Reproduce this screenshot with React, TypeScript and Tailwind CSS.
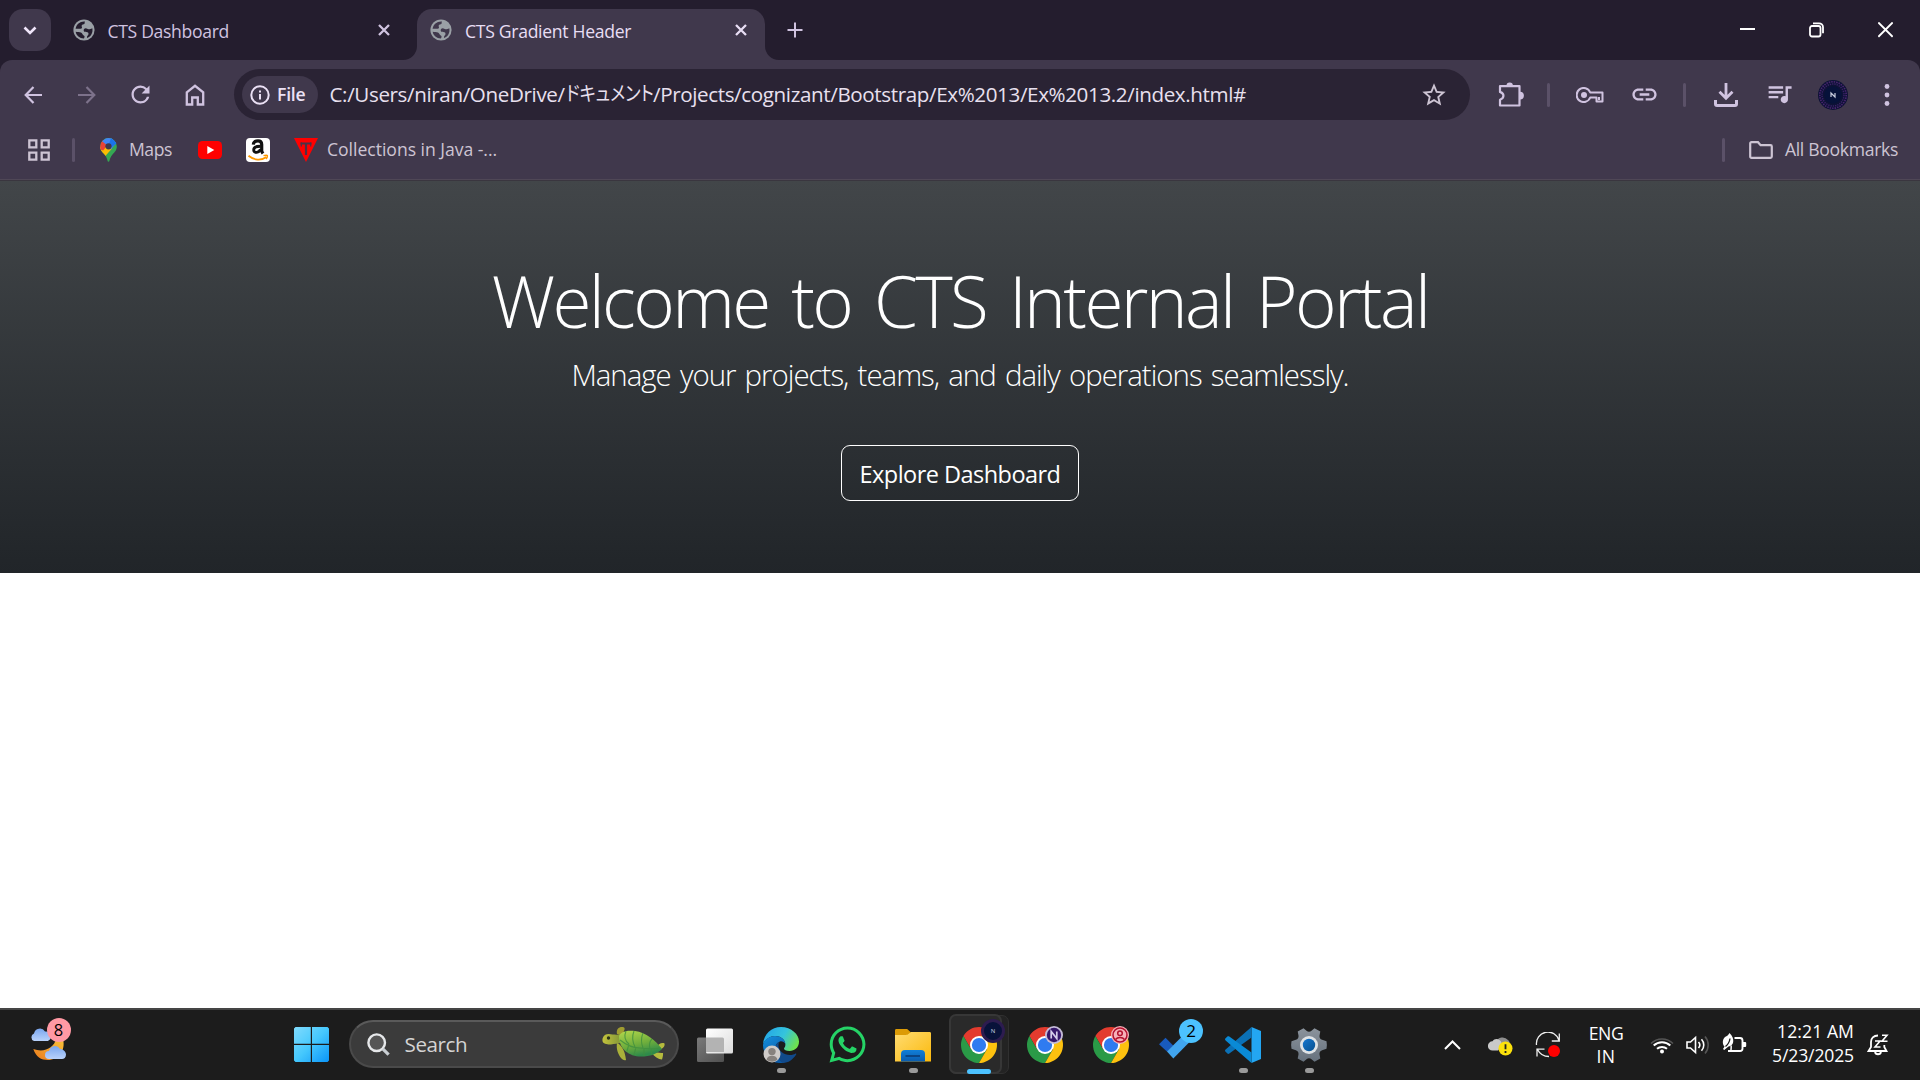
import React from "react";
import { MdRefresh, MdStarBorder, MdLink, MdQueueMusic } from "react-icons/md";
import { FaWhatsapp } from "react-icons/fa";

function Globe() {
  return (
    <svg width="22" height="22" viewBox="0 0 22 22" className="shrink-0">
      <circle cx="11" cy="11" r="10.6" fill="#9aa0a6" />
      <g className="fill-[var(--hole)]">
        <path d="M12 2.500C7.400 2 3.300 5 2.600 9.800h4.200c1.200 0 2.200-.4 2.200-1.400 0-.8-.6-1.300-.3-2 .5-1 1.900-.6 2.600-1.300.7-.8.1-1.900.7-2.600z" />
        <path d="M2.700 12.700c1.900.3 3.800.2 5.300.9 1.600.8 1.300 2.400 2.700 2.900 1.300.5 1 1.700.2 2.900-4.200 0-7.600-2.800-8.200-6.700z" />
        <path d="M19.300 9.200c.9 4.300-1.300 8.300-5 9.700-.8-.6-.2-1.800.6-2.600.9-.9.9-2.500-.4-3.100-1.500-.6-3.200.1-3.700-1.300-.5-1.300.6-2.600 2-2.600 1.200 0 1.600 1 2.800 1 1.300 0 2.300-.6 3.700-1.100z" />
      </g>
    </svg>
  );
}

function CloseX({ className }: { className: string }) {
  return (
    <svg width="12" height="12" viewBox="0 0 12 12" className={className} fill="none" stroke="currentColor" strokeWidth="2.300">
      <path d="M1 1l10 10M11 1L1 11" />
    </svg>
  );
}

function TabStrip() {
  return (
    <div className="flex h-[60px] items-end bg-[#241d2e]">
      <button className="mb-[9px] ml-[9px] flex size-[42px] shrink-0 items-center justify-center rounded-[14px] bg-[#40384c]">
        <svg width="14" height="9" viewBox="0 0 14 9" fill="none" stroke="#f0e6fa" strokeWidth="2.600">
          <path d="M1.500 1.500L7 7l5.500-5.500" />
        </svg>
      </button>
      <div className="flex h-[51px] w-[352px] items-start pt-[10px] pl-[22px] text-[#d0c3e0] [--hole:#241d2e]">
        <Globe />
        <span className="ml-[12.500px] h-[24px] w-[270px] text-[17.6px] leading-[24.500px] tracking-[-0.335px]">CTS Dashboard</span>
        <CloseX className="mt-[5px]" />
      </div>
      <svg width="14" height="14" viewBox="0 0 14 14" className="shrink-0"><path d="M14 0v14H0A14 14 0 0 0 14 0z" fill="#40384c" /></svg>
      <div className="flex h-[51px] w-[348px] items-start rounded-t-[15px] bg-[#40384c] pt-[10px] pl-[13px] text-[#e8def4] [--hole:#40384c]">
        <Globe />
        <span className="ml-[13px] h-[24px] w-[270px] text-[17.6px] leading-[24.500px] tracking-[-0.300px]">CTS Gradient Header</span>
        <CloseX className="mt-[5px]" />
      </div>
      <svg width="14" height="14" viewBox="0 0 14 14" className="shrink-0"><path d="M0 0v14h14A14 14 0 0 1 0 0z" fill="#40384c" /></svg>
      <svg width="16" height="16" viewBox="0 0 16 16" className="mb-[22px] ml-[8px]" stroke="#d0c3e0" strokeWidth="2"><path d="M8 .5v15M.5 8h15" /></svg>
      <div className="mb-[22px] ml-auto flex items-center gap-[54px] pr-[27px]">
        <svg width="15" height="16" viewBox="0 0 15 16"><path d="M0 7h15" stroke="#fff" strokeWidth="2" /></svg>
        <svg width="15" height="16" viewBox="0 0 15 16" fill="none" stroke="#fff" strokeWidth="1.800">
          <rect x="1" y="4" width="10.500" height="10.500" rx="2" />
          <path d="M4 1.300h6a4 4 0 0 1 4 4v6" />
        </svg>
        <svg width="15" height="16" viewBox="0 0 15 16" stroke="#fff" strokeWidth="2"><path d="M.3.500l14.400 14.400M14.700.500L.3 14.900" /></svg>
      </div>
    </div>
  );
}

function Divider({ className }: { className: string }) {
  return <div className={`h-6 w-[3px] shrink-0 rounded-full bg-[#5b5168] ${className}`} />;
}

function Toolbar() {
  return (
    <div className="bg-[#241d2e]">
      <div className="flex h-[69px] items-center rounded-t-xl bg-[#40384c] text-[#d0c3e0]">
        <svg width="18" height="18" viewBox="0 0 18 18" className="ml-6" fill="none" stroke="currentColor" strokeWidth="2.200"><path d="M9.500 1L1.700 9l7.800 8M1.700 9H18" /></svg>
        <svg width="18" height="18" viewBox="0 0 18 18" className="ml-9" fill="none" stroke="#7d728b" strokeWidth="2.200"><path d="M8.500 1l7.800 8-7.800 8M16.300 9H0" /></svg>
        <MdRefresh size={27} className="ml-[31px]" />
        <svg width="20" height="22" viewBox="0 0 20 22" className="ml-[31px]" fill="none" stroke="currentColor" strokeWidth="2.300">
          <path d="M1.800 8.300L10 1.800l8.200 6.500v12.200h-5.400v-7H7.200v7H1.800z" />
        </svg>
        <div className="ml-[29px] flex h-[51px] w-[1236px] items-center rounded-full bg-[#2a2334] pl-[7.500px]">
          <div className="flex h-[37px] w-[76px] items-center rounded-full bg-[#40384c] pl-2 text-[#ebe1f5]">
            <svg width="20" height="20" viewBox="0 0 20 20" fill="none" stroke="currentColor" strokeWidth="2"><circle cx="10" cy="10" r="8.700" /><path d="M10 9v5.500M10 5.500v2" /></svg>
            <span className="mb-px ml-[7.500px] text-[17.6px] leading-6 font-semibold tracking-[-0.228px]">File</span>
          </div>
          <div className="mb-[2px] ml-[12px] flex items-center text-[20.6px] leading-[30px] whitespace-nowrap text-[#e8e0ef]">
            <span className="w-[236px] tracking-[-0.374px]">C:/Users/niran/OneDrive/</span>
            <span className="w-[87.500px]"><span className="inline-block origin-left scale-x-[0.860] text-[20px] [font-feature-settings:'palt']">ドキュメント</span></span>
            <span className="tracking-[-0.378px]">/Projects/cognizant/Bootstrap/Ex%2013/Ex%2013.2/index.html#</span>
          </div>
          <MdStarBorder size={28} className="mr-[22px] ml-auto text-[#cdc4d3]" />
        </div>
        <svg width="26" height="26" viewBox="0 0 26 26" className="ml-[28px]">
          <path d="M2 4.200h19.500v19.300H2v-5.800c4.600-1.600 4.600-6.200 0-7.800z" fill="none" stroke="currentColor" strokeWidth="2.200" strokeLinejoin="round" />
          <path d="M8.500 3.600a3.200 3.200 0 0 1 6.400 0zM22 9.700a3.900 3.900 0 0 1 0 7.800z" fill="currentColor" />
        </svg>
        <Divider className="ml-[23px]" />
        <svg width="28" height="16" viewBox="0 0 28 16" className="ml-[26px]" fill="none" stroke="currentColor" strokeWidth="2">
          <path d="M14.200 5.500a7 7 0 1 0 0 5h6.300v4h6V5.500z" strokeLinejoin="round" />
          <circle cx="8" cy="8" r="3" fill="currentColor" stroke="none" />
          <path d="M23 10v3" />
        </svg>
        <MdLink size={29} className="ml-[25.500px]" />
        <Divider className="ml-6" />
        <svg width="24" height="24" viewBox="0 0 24 24" className="ml-[28px]" fill="none" stroke="currentColor">
          <path d="M12 0v14M5.500 8.700l6.500 6.500 6.500-6.500" strokeWidth="2.800" />
          <path d="M1.500 17v4a1.500 1.500 0 0 0 1.500 1.500h18a1.500 1.500 0 0 0 1.500-1.500v-4" strokeWidth="3" />
        </svg>
        <MdQueueMusic size={29} className="mb-[3px] ml-[27px]" />
        <svg width="30" height="30" viewBox="0 0 30 30" className="ml-[24px]">
          <circle cx="15" cy="15" r="15" fill="#0d1236" />
          <circle cx="15" cy="15" r="13.200" fill="none" stroke="#4a2470" strokeWidth="1.600" strokeDasharray="1.500 1" />
          <circle cx="15" cy="15" r="11" fill="none" stroke="#3b2166" strokeWidth="1.500" strokeDasharray="1.300 1" />
          <circle cx="15" cy="15" r="8.500" fill="#06123a" />
          <path d="M13 17v-4l4 4v-4" fill="none" stroke="#c9cfdf" strokeWidth="1.200" />
        </svg>
        <svg width="6" height="22" viewBox="0 0 6 22" className="ml-9" fill="currentColor"><circle cx="3" cy="2.500" r="2.400" /><circle cx="3" cy="11" r="2.400" /><circle cx="3" cy="19.500" r="2.400" /></svg>
      </div>
    </div>
  );
}

function BookmarksBar() {
  return (
    <div className="flex h-[51px] items-start border-b border-[#4f4756] bg-[#40384c] pt-[9px] text-[17.6px] leading-[23px] whitespace-nowrap text-[#cdc4d3]">
      <svg width="22" height="22" viewBox="0 0 22 22" className="mt-px ml-7" fill="none" stroke="currentColor" strokeWidth="2.300">
        <path d="M1.300 1.300h7v7h-7zM13.700 1.300h7v7h-7zM1.300 13.700h7v7h-7zM13.700 13.700h7v7h-7z" />
      </svg>
      <Divider className="ml-[22px]" />
      <svg width="17" height="24" viewBox="0 0 17 24" className="ml-[24.500px]">
        <defs><clipPath id="pin"><path d="M8.500 0A8.300 8.300 0 0 0 .2 8.300c0 4 2 5.600 4.300 8.200 2 2.400 2.700 4.500 3.100 6.500.2 1.100 1.600 1.100 1.800 0 .4-2 1.100-4.100 3.100-6.500 2.300-2.600 4.300-4.200 4.300-8.200A8.300 8.300 0 0 0 8.500 0z" /></clipPath></defs>
        <g clipPath="url(#pin)">
          <path d="M0 0h17v24H0z" fill="#34a853" />
          <path d="M0 18V9l6-2 6 3.500-8 9z" fill="#fbbc04" />
          <path d="M0 11.500V3l3-1 5 4.500-4.800 6z" fill="#ea4335" />
          <path d="M2 3.200L6 0h6l4.500 5-5.800 6.500L5.500 6z" fill="#4285f4" />
          <path d="M11 0l6 5-5 4-3-3z" fill="#1a73e8" />
        </g>
        <circle cx="8.500" cy="8.300" r="3.100" fill="#40384c" />
      </svg>
      <span className="ml-[12.500px] w-[68.500px] tracking-[-0.455px]">Maps</span>
      <svg width="24" height="18" viewBox="0 0 24 18" className="mt-[3px]"><rect width="24" height="18" rx="4.500" fill="#f00" /><path d="M9.300 5l7 4-7 4z" fill="#fff" /></svg>
      <div className="ml-6 h-6 w-6 rounded-[4px] bg-white">
        <svg width="24" height="24" viewBox="0 0 24 24" fill="none">
          <path d="M7.300 6.600C7.600 3.800 9.600 2.900 12 2.900c2.500 0 3.700 1.200 3.700 3.600v6c0 1.500.6 2 1.300 3" stroke="#111" strokeWidth="3.200" />
          <path d="M14.500 8.200c-4.500 0-6.800 1-6.800 3.700 0 3.600 5.600 3.200 6.800-.8" stroke="#111" strokeWidth="2.900" />
          <path d="M2.500 17.800c5.500 4.600 12.800 5 18 1.200" stroke="#ff9900" strokeWidth="1.800" />
          <path d="M17.500 17.700c2-.6 4-.6 3.900.2 0 1-.6 2.400-1.400 3.200" stroke="#ff9900" strokeWidth="1.400" />
        </svg>
      </div>
      <svg width="24" height="24" viewBox="0 0 24 24" className="ml-6"><path d="M0 0h24L12 24z" fill="#f00" /><path d="M6.500 5.500h11M12 5v12" stroke="#4b3246" strokeWidth="2.200" /><path d="M7.300 4.500v4M16.700 4.500v4" stroke="#4b3246" strokeWidth="1.200" /></svg>
      <span className="ml-[9.500px] tracking-[-0.030px]">Collections in Java -...</span>
      <Divider className="ml-auto" />
      <svg width="24" height="18" viewBox="0 0 24 18" className="mt-[3px] ml-6" fill="none" stroke="currentColor" strokeWidth="2.200"><path d="M1.200 15V2.500c0-.8.500-1.300 1.300-1.300H9l2.600 3h9.900c.8 0 1.300.5 1.300 1.300V15.500c0 .8-.5 1.300-1.300 1.300h-19c-.8 0-1.300-.5-1.300-1.300z" /></svg>
      <span className="mr-[22px] ml-3 tracking-[-0.321px]">All Bookmarks</span>
    </div>
  );
}

function Hero() {
  return (
    <header className="flex h-[392px] flex-col items-center bg-linear-to-b from-[#424649] to-[#212529] pt-[77px] text-center whitespace-nowrap text-white [font-family:'Open_Sans','Noto_Sans',sans-serif]">
      <h1 className="text-[71px] leading-[86px] font-light tracking-[-2.670px] [word-spacing:7px]">Welcome to CTS Internal Portal</h1>
      <p className="mt-[9px] text-[29.4px] leading-[45px] font-light tracking-[-0.990px] [word-spacing:2.500px]">Manage your projects, teams, and daily operations seamlessly.</p>
      <button className="mt-[47px] h-14 w-[238px] rounded-[9px] border border-white text-[23.5px] leading-[56px] tracking-[-0.538px]">Explore Dashboard</button>
    </header>
  );
}

function ChromeIcon() {
  return (
    <svg width="36" height="36" viewBox="2 2 44 44">
      <path d="M4.950 13A22 22 0 0 1 43.050 13H24L14.470 29.500z" fill="#e33b2e" />
      <path d="M24 46A22 22 0 0 1 4.950 13L14.470 29.500H33.530z" fill="#2a9a47" />
      <path d="M43.050 13A22 22 0 0 1 24 46L33.530 29.500 24 13z" fill="#fdc10f" />
      <circle cx="24" cy="24" r="11" fill="#fff" />
      <circle cx="24" cy="24" r="8.700" fill="#2f7bf0" />
    </svg>
  );
}

function EdgeIcon() {
  return (
    <svg width="36" height="36" viewBox="0 0 36 36">
      <defs>
        <linearGradient id="eg1" x1="0" y1="0.200" x2="1" y2="0.600"><stop offset="0" stopColor="#22a5e8" /><stop offset=".55" stopColor="#35c4dc" /><stop offset="1" stopColor="#6fe34c" /></linearGradient>
        <linearGradient id="eg2" x1="0" y1="0" x2="0.500" y2="1"><stop offset="0" stopColor="#1490df" /><stop offset="1" stopColor="#0c59a4" /></linearGradient>
      </defs>
      <path d="M0 17C.8 7 8.500 0 18 0c10.500 0 18 7.500 18 14.500 0 6-4.500 9.500-9.500 9.500-3.500 0-5.500-1.200-5.500-2.300 0-1 1.400-1.500 1.400-4C22.400 12 17 9 12.500 9 7 9 2.500 12 0 17z" fill="url(#eg1)" />
      <path d="M0 18C1 12.500 6.500 9 12 9c5.500 0 10 3 10.400 8-1-2-3.400-3-5.400-2.500-3.500 1-5 4.500-4.500 8C13 29 17 34.500 22 35.500 9.500 38.500 0 29 0 18z" fill="url(#eg2)" />
      <path d="M12.500 22c-.3-3.500 1.300-6.300 4.300-7.400-1 1.200-1.300 2.400-1.300 4 0 5.500 5.500 9.400 11.500 9.400 2.500 0 4.200-.7 5.300-1.300.6-.3 1.300.3.900.9C29.500 33 25.500 36 20 36c-4-2-7.100-8.500-7.500-14z" fill="#114a8b" />
      <circle cx="9" cy="27" r="8.500" fill="#cfcbc8" />
      <circle cx="9" cy="24.600" r="3.700" fill="#87827e" />
      <path d="M3.500 32.800a5.600 5 0 0 1 11 0A8.400 8.400 0 0 1 3.500 32.800z" fill="#87827e" />
    </svg>
  );
}

function ExplorerIcon() {
  return (
    <svg width="36" height="36" viewBox="0 0 36 36">
      <defs>
        <linearGradient id="fo" x1="0" y1="0" x2="1" y2="1"><stop offset="0" stopColor="#ffdc72" /><stop offset="1" stopColor="#fbb90c" /></linearGradient>
        <linearGradient id="fb" x1="0" y1="0" x2="0" y2="1"><stop offset="0" stopColor="#117fd8" /><stop offset="1" stopColor="#0a5cae" /></linearGradient>
      </defs>
      <path d="M0 3.500C0 2.500.5 2 1.500 2h9.700c1 0 1.500.3 2.100.9L16 5.500V10H0z" fill="#dc9b06" />
      <path d="M0 8h11c1 0 1.700-.2 2.400-.9L15 5.800c.6-.5 1-.8 2-.8h17.500c1 0 1.500.5 1.500 1.500V34.500H0z" fill="url(#fo)" />
      <path d="M6 34.500V27a4 4 0 0 1 4-4h16a4 4 0 0 1 4 4v7.500z" fill="url(#fb)" />
      <path d="M10.500 29h14.500" stroke="#0b4584" strokeWidth="2" />
    </svg>
  );
}

function Turtle() {
  return (
    <svg width="63" height="36" viewBox="0 0 63 36">
      <defs>
        <linearGradient id="sh" x1="0" y1="0" x2="0.400" y2="1"><stop offset="0" stopColor="#b5d84c" /><stop offset=".6" stopColor="#6fae3c" /><stop offset="1" stopColor="#2f8a4a" /></linearGradient>
        <linearGradient id="sk" x1="0" y1="0" x2="1" y2="0"><stop offset="0" stopColor="#c3c23c" /><stop offset="1" stopColor="#7f9438" /></linearGradient>
      </defs>
      <path d="M15 8C14 3 17 .5 21 1c2 .5 2 2 1 4l-2 5z" fill="#a09c30" />
      <path d="M15 17c3 1 8 6 9 17-1.500 1-4-.5-5-2-3-4-5-9-4-15z" fill="#aab13a" />
      <path d="M54 22c2-4 6-6 8.500-4.500.8 3-2.500 6-6 6.500zM50 27c3-1 8 0 11 0 .3 2-.5 5-1 6.500-3.500 0-8-3-10-6.500z" fill="#b5bb3e" />
      <path d="M.5 15C0 11 3 7.500 7 8c3 .3 6 1 11 .5l2 8c-4 1-8 1.500-11 2-3 .3-8-.5-8.500-3.500z" fill="url(#sk)" />
      <path d="M17 10c2-5 9-6 16-5 11 1.500 20 9 27 18-5 5-12 7.500-21 7.500C27 30.500 17 23 17 10z" fill="url(#sh)" />
      <path d="M24 5c-2 5-1 10 3 13M32 5c-2 5-2 10 1 16M41 7c-2 5-2 10 0 15M50 13c-3 3-3 6-2 10M18 14c5 4 12 8 20 8 8 1 14 1 21 0M27 18l-2 7M34 21l-2 8M42 23v7M49 23l1 6" stroke="#3f8f3f" strokeWidth="1.100" fill="none" opacity=".8" />
      <circle cx="6.500" cy="12" r="1.700" fill="#2b3417" />
    </svg>
  );
}

function AppCell({ children, running }: { children: React.ReactNode; running?: boolean }) {
  return (
    <div className="relative flex h-full w-[66px] shrink-0 items-center justify-center">
      {children}
      {running && <div className="absolute bottom-[6px] left-[29px] h-[5px] w-[9px] rounded-full bg-[#9a9a9a]" />}
    </div>
  );
}

function GearIcon() {
  return (
    <svg width="36" height="36" viewBox="0 0 36 36">
      <defs>
        <linearGradient id="ge" x1="0" y1="0" x2="0" y2="1"><stop offset="0" stopColor="#8b939c" /><stop offset="1" stopColor="#66717d" /></linearGradient>
        <linearGradient id="gc" x1="0" y1="0" x2="1" y2="1"><stop offset="0" stopColor="#1577cf" /><stop offset="1" stopColor="#07508f" /></linearGradient>
      </defs>
      <path d="M12.500 1.200l3 2.600c1.500 1.200 3.500 1.200 5 0l3-2.600 5.800 3.300-.8 4c-.3 2 .7 3.700 2.600 4.300l4.400 1.500c.5 2.500.5 5 0 7.400l-4.400 1.500c-1.900.6-2.900 2.300-2.600 4.300l.8 4-5.800 3.300-3-2.600c-1.500-1.200-3.500-1.200-5 0l-3 2.600-5.800-3.300.8-4c.3-2-.7-3.700-2.600-4.300L.5 21.700c-.5-2.500-.5-5 0-7.400l4.400-1.500c1.900-.6 2.900-2.300 2.600-4.300l-.8-4z" fill="url(#ge)" />
      <circle cx="18" cy="18" r="9" fill="#dfe3e6" />
      <circle cx="18" cy="18" r="6.200" fill="url(#gc)" />
    </svg>
  );
}

function Taskbar() {
  return (
    <footer className="flex h-[72px] items-center border-t-2 border-[#454545] bg-[#1c1c1c] pb-px text-white">
      <div className="relative ml-[30px] h-9 w-9">
        <svg width="36" height="36" viewBox="0 0 36 36">
          <defs>
            <linearGradient id="mo" x1="1" y1="0" x2="0" y2="1"><stop offset="0" stopColor="#f9c23a" /><stop offset="1" stopColor="#ea7a1c" /></linearGradient>
            <linearGradient id="cl" x1="0" y1="0" x2="0" y2="1"><stop offset="0" stopColor="#7ba7ef" /><stop offset="1" stopColor="#b9d2fb" /></linearGradient>
          </defs>
          <path d="M33 12c3 12-5 21-15 21-7 0-12-3-14.700-11C14 26 24 21 26 12z" fill="url(#mo)" />
          <path d="M4 14a4 4 0 0 1 0-7.500A6 6 0 0 1 15 4.500c3 0 6 2 6 5 0 2-1.500 4.500-4 4.500z" fill="url(#cl)" />
          <path d="M19 32a4 4 0 0 1 0-8A6 6 0 0 1 30 22c3 0 6 2.500 6 5.500S34 32 32 32z" fill="url(#cl)" />
        </svg>
        <div className="absolute -top-[9px] left-[16.500px] h-6 w-6 rounded-full bg-[#ff99a4] text-center text-[16.500px] leading-6 text-black">8</div>
      </div>
      <svg width="35" height="35" viewBox="0 0 35 35" className="ml-[228px]">
        <defs><linearGradient id="wi" gradientUnits="userSpaceOnUse" x1="0" y1="0" x2="35" y2="35"><stop offset="0" stopColor="#80dbfd" /><stop offset=".5" stopColor="#45c8fd" /><stop offset="1" stopColor="#0a94f8" /></linearGradient></defs>
        <path d="M1.500 0H16.800V16.800H0V1.500zM18 0h15.500L35 1.500V16.800H18zM0 18h16.800v17H1.500L0 33.500zM18 18h17v15.500L33.500 35H18z" fill="url(#wi)" />
      </svg>
      <div className="mb-px ml-5 flex h-12 w-[330px] items-center rounded-full border-2 border-[#4a4a4a] border-t-[#5a5a5a] bg-[#3b3b3b] pl-4">
        <svg width="23" height="23" viewBox="0 0 23 23" fill="none"><circle cx="9.700" cy="9.700" r="8.300" fill="#555" stroke="#e6e8ea" strokeWidth="2.400" /><path d="M15.800 15.800l5.800 5.800" stroke="#c9ced3" strokeWidth="3.200" /></svg>
        <span className="ml-[14.500px] text-[20.6px] leading-7 tracking-[-0.416px] text-[#d4d4d4]">Search</span>
        <div className="mr-[12px] ml-auto"><Turtle /></div>
      </div>
      <div className="ml-[3px] flex h-full items-center">
        <AppCell>
          <svg width="36" height="36" viewBox="0 0 36 36">
            <defs>
              <linearGradient id="tw" x1="0" y1="0" x2="1" y2="1"><stop offset="0" stopColor="#fff" /><stop offset="1" stopColor="#dcdcdc" /></linearGradient>
              <linearGradient id="tg" x1="0" y1="0" x2="1" y2="1"><stop offset="0" stopColor="#7a7a7a" /><stop offset="1" stopColor="#505050" /></linearGradient>
            </defs>
            <rect x="0" y="10.500" width="27" height="24.500" rx="1.500" fill="url(#tg)" />
            <rect x="9" y="1.500" width="27" height="25" rx="1.500" fill="url(#tw)" />
            <path d="M9 10.500h16.500a1.500 1.500 0 0 1 1.500 1.500v13H9z" fill="#b3b3b3" />
          </svg>
        </AppCell>
        <AppCell running><EdgeIcon /></AppCell>
        <AppCell><FaWhatsapp size={41} color="#25d366" /></AppCell>
        <AppCell running><ExplorerIcon /></AppCell>
        <div className="relative flex h-full w-[66px] shrink-0 items-center justify-center">
          <div className="absolute top-[5px] left-[3px] h-[59px] w-[60px] rounded-[7px] border border-[#303030] bg-[#232323]" />
          <div className="absolute top-[4px] left-[3px] h-[60px] w-[53px] rounded-[7px] border-2 border-[#373737] bg-[#2a2a2a]" />
          <div className="relative"><ChromeIcon /></div>
          <div className="absolute top-[9px] left-[35px] h-6 w-6 rounded-full border-[3px] border-[#2d1c4f] bg-[#08123a] text-center text-[6px] leading-[18px] text-slate-300">N</div>
          <div className="absolute bottom-[5px] left-[21px] h-[5px] w-6 rounded-full bg-[#4cc2ff]" />
        </div>
        <AppCell>
          <ChromeIcon />
          <svg width="18" height="18" viewBox="0 0 18 18" className="absolute top-4 left-[33px]"><circle cx="9" cy="9" r="9" fill="#c5bcd8" /><circle cx="9" cy="9" r="7.200" fill="#36186b" /><path d="M6.200 12.500V5.500l5.600 7V5.500" fill="none" stroke="#d5cdea" strokeWidth="1.700" /></svg>
        </AppCell>
        <AppCell>
          <ChromeIcon />
          <svg width="18" height="18" viewBox="0 0 18 18" className="absolute top-4 left-[33px]" fill="none" stroke="#b3122f" strokeWidth="1.500"><circle cx="9" cy="9" r="9" fill="#f6b0b9" stroke="none" /><circle cx="9" cy="9" r="7" /><circle cx="9" cy="7.200" r="2.300" /><path d="M4.500 13.500c2-2.800 7-2.800 9 0" /></svg>
        </AppCell>
        <AppCell>
          <svg width="36" height="36" viewBox="0 0 36 36"><path d="M6.500 10.700l7.700 7.800-6 6.200L0 17.300z" fill="#185abd" /><path d="M8 24.500L25.500 7l6.500 6.500-17.700 18z" fill="#41a5ee" /></svg>
          <div className="absolute top-[9px] left-[35px] h-6 w-6 rounded-full bg-[#4cc2ff] text-center text-[17px] leading-[24px] text-black">2</div>
        </AppCell>
        <AppCell running>
          <svg width="36" height="36" viewBox="0 0 36 36">
            <path d="M26.500 0L36 4v28l-9.500 4z" fill="#23a6f2" />
            <path d="M26.500 0v10.500L4.300 26.500c-.6.500-1.300.5-1.900 0L.6 24.800c-.8-.7-.8-1.500 0-2.200z" fill="#0b70b5" />
            <path d="M26.500 36V25.500L4.300 9.500c-.6-.5-1.300-.5-1.900 0L.6 11.200c-.8.7-.8 1.500 0 2.200z" fill="#0a8ad6" />
          </svg>
        </AppCell>
        <AppCell running><GearIcon /></AppCell>
      </div>
      <svg width="17" height="10" viewBox="0 0 17 10" className="ml-[102px]" fill="none" stroke="#fff" strokeWidth="2"><path d="M1 9l7.500-7.500L16 9" /></svg>
      <svg width="26" height="22" viewBox="0 0 26 22" className="mt-px ml-[27px]">
        <path d="M8 8a7 7 0 0 1 12-2c3 2 3 10-1 10H8z" fill="#8e8e8e" />
        <path d="M4.500 16.500a4.600 4.600 0 0 1 0-9.200C7 3.500 12 5 13.500 8.500L10 16.500z" fill="#c9c9c9" />
        <circle cx="17.500" cy="14.500" r="7" fill="#fbe10c" /><path d="M17.500 10.300v5M17.500 17v2" stroke="#222" strokeWidth="1.800" />
      </svg>
      <svg width="26" height="26" viewBox="0 0 26 26" className="ml-[21px]" fill="none" stroke="#eee" strokeWidth="1.300">
        <path d="M1.500 13A11.500 11.500 0 0 1 24 8.500M24.300 1.500v7.500h-7.500M2 24.500v-7.300h7.500M2.500 17.500C5 22.500 9.500 24.500 14 24.500" />
        <circle cx="19" cy="19" r="6" fill="#f00" stroke="none" />
      </svg>
      <div className="ml-[20px] w-[50px] text-center text-[17.6px] leading-[23px]">
        <div className="tracking-[-0.400px]">ENG</div>
        <div className="tracking-[0.500px]">IN</div>
      </div>
      <svg width="24" height="18" viewBox="0 0 24 18" className="ml-[19px]" fill="none" strokeWidth="2">
        <path d="M1 7.500a15.500 15.500 0 0 1 22 0" stroke="#555" strokeWidth="1.500" />
        <path d="M3.700 9.500a12 12 0 0 1 16.600 0M7 12.800a7.500 7.500 0 0 1 10 0" stroke="#fff" />
        <circle cx="12" cy="15.500" r="2" fill="#fff" />
      </svg>
      <svg width="25" height="20" viewBox="0 0 25 20" className="ml-[12px]" fill="none" stroke="#fff" strokeWidth="1.600">
        <path d="M1 7v6h3.500l5 4.500v-15L4.500 7z" />
        <path d="M12.500 7a4.500 4.500 0 0 1 0 6M15.500 4.200a8.500 8.500 0 0 1 0 11.600" />
        <path d="M19 1.500a13 13 0 0 1 0 17" stroke="#555" />
      </svg>
      <svg width="25" height="20" viewBox="0 0 25 20" className="mb-[3px] ml-[11px]">
        <path d="M12.500 5h5.500a2.500 2.500 0 0 1 2.500 2.500v8a2.500 2.500 0 0 1-2.500 2.500H6" fill="none" stroke="#fff" strokeWidth="1.900" />
        <path d="M21 9h2.200a1 1 0 0 1 1 1v3a1 1 0 0 1-1 1H21z" fill="#fff" />
        <path d="M7.500 0c3 3 4.200 6 3.700 9-.4 2.600-2.200 4-4.700 4.500L2.200 17l-1.200-1 1.500-2.500C0 11 .5 6 3 4c2-1 3.500-2 4.500-4z" fill="#fff" />
        <path d="M8 5.500C7.500 9 6 11.500 3.500 13.500" fill="none" stroke="#1c1c1c" strokeWidth="1.300" />
        <path d="M9 12.500c.5 1.500 0 3 0 4.500" stroke="#fff" strokeWidth="1.500" />
      </svg>
      <div className="mb-[3px] ml-auto text-right text-[17.6px] leading-6">
        <div className="tracking-[0.063px]">12:21 AM</div>
        <div className="tracking-[-0.158px]">5/23/2025</div>
      </div>
      <svg width="22" height="22" viewBox="0 0 22 22" className="mr-[31px] ml-[13px]" fill="none" stroke="#fff" strokeWidth="1.800">
        <path d="M11 1.500C6.500 1.500 4 4.500 4 8v5l-2.500 4h18L17.300 13v-2M8 18c.5 3 5.500 3 6 0" />
        <path d="M8 7h5l-5 6h5.500M15 1.300h5l-5 6h5.500" strokeWidth="1.600" />
      </svg>
    </footer>
  );
}

export default function App() {
  return (
    <div className="flex h-[1080px] w-[1920px] flex-col overflow-hidden bg-white [font-family:'Open_Sans','Noto_Sans','Noto_Sans_CJK_JP',sans-serif]">
      <TabStrip />
      <Toolbar />
      <BookmarksBar />
      <div className="h-px bg-[#3a363f]" />
      <Hero />
      <main className="flex-1 bg-white" />
      <Taskbar />
    </div>
  );
}
